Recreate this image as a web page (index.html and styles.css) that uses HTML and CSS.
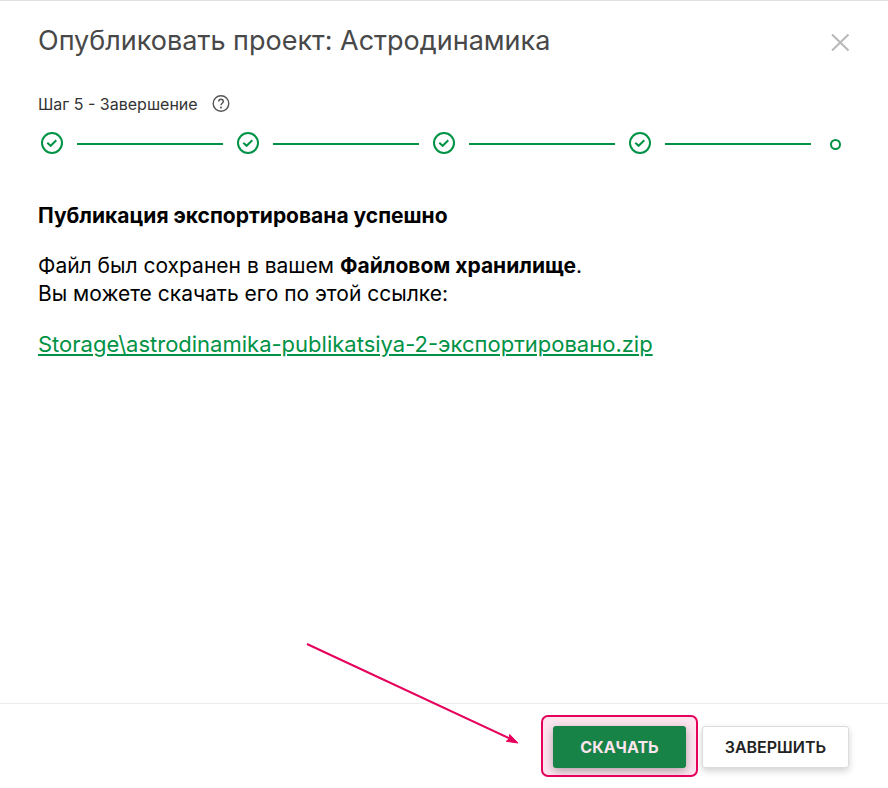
FILE: index.html
```html
<!DOCTYPE html>
<html lang="ru">
<head>
<meta charset="utf-8">
<meta name="viewport" content="width=device-width, initial-scale=1">
<title>Опубликовать проект</title>
<link rel="stylesheet" href="styles.css">
</head>
<body>
<div class="dialog" role="dialog" aria-labelledby="dialog-title">
  <header class="header">
    <h1 class="title" id="dialog-title">Опубликовать проект: Астродинамика</h1>
    <button class="close" type="button" aria-label="Закрыть">
      <svg width="20" height="20" viewBox="0 0 20 20"><path d="M2 2.5 18.5 18.5M18.5 2.5 2 18.5"/></svg>
    </button>
  </header>
  <main class="content">
    <div class="step-label">
      <span>Шаг 5 - Завершение</span>
      <button class="help" type="button" aria-label="Справка">
        <svg width="18" height="18" viewBox="0 0 18 18"><circle cx="9" cy="8.5" r="7.8"/><path d="M6.7 6.6C6.7 3.4 11.3 3.5 11.3 6.5C11.3 8.3 9 8.3 9 10.2"/><circle class="point" cx="9" cy="12.5" r="1"/></svg>
      </button>
    </div>
    <div class="stepper">
      <svg class="done" width="22" height="22" viewBox="0 0 22 22"><circle cx="11" cy="11" r="10"/><path d="M6.3 10.8 9.6 13.8 15.3 8.2"/></svg>
      <span class="line"></span>
      <svg class="done" width="22" height="22" viewBox="0 0 22 22"><circle cx="11" cy="11" r="10"/><path d="M6.3 10.8 9.6 13.8 15.3 8.2"/></svg>
      <span class="line"></span>
      <svg class="done" width="22" height="22" viewBox="0 0 22 22"><circle cx="11" cy="11" r="10"/><path d="M6.3 10.8 9.6 13.8 15.3 8.2"/></svg>
      <span class="line"></span>
      <svg class="done" width="22" height="22" viewBox="0 0 22 22"><circle cx="11" cy="11" r="10"/><path d="M6.3 10.8 9.6 13.8 15.3 8.2"/></svg>
      <span class="line"></span>
      <svg class="done" width="22" height="22" viewBox="0 0 22 22"><circle cx="10.5" cy="12.5" r="4.5"/></svg>
    </div>
    <div class="message">
      <h2 class="message-title">Публикация экспортирована успешно</h2>
      <p class="text">Файл был сохранен в вашем <strong>Файловом хранилище</strong>.<br>Вы можете скачать его по этой ссылке:</p>
      <p class="text"><a class="file" href="#">Storage\astrodinamika-publikatsiya-2-экспортировано.zip</a></p>
    </div>
  </main>
  <footer class="footer">
    <div class="highlight">
      <button class="button primary" type="button">СКАЧАТЬ</button>
      <svg class="arrow" width="214" height="104" viewBox="0 0 214 104"><path class="shaft" d="M2 2 206 97"/><path class="head" d="M213 101 201.3 99.3 204.5 96.5 204.7 92.5Z"/></svg>
    </div>
    <button class="button" type="button">ЗАВЕРШИТЬ</button>
  </footer>
</div>
</body>
</html>
```

FILE: styles.css
```css
* {
  box-sizing: border-box;
}

body {
  margin: 0;
  background: #fff;
  color: #000;
  font-family: Inter, Roboto, sans-serif;
}

.dialog {
  display: flex;
  flex-direction: column;
  min-height: 100vh;
  border-top: 1px solid #e0e0e0;
}

.header {
  display: flex;
  align-items: center;
  justify-content: space-between;
  padding: 22px 38px 0 38px;
}

.title {
  margin: 0;
  color: #484848;
  font-size: 27px;
  font-weight: 400;
  line-height: 36px;
}

.close,
.help {
  display: flex;
  padding: 0;
  border: 0;
  background: none;
  cursor: pointer;
}

.close {
  padding-top: 2px;
}

.close svg {
  fill: none;
  stroke: #b8b8b8;
  stroke-width: 2;
}

.content {
  flex: 1;
  padding: 35px 39px 24px 38px;
}

.step-label {
  display: flex;
  align-items: center;
  gap: 14px;
  color: #333;
  font-size: 16px;
  line-height: 20px;
}

.help svg {
  fill: none;
  stroke: #555;
  stroke-width: 1.4;
}

.help .point {
  fill: #555;
  stroke: none;
}

.stepper {
  display: flex;
  align-items: center;
  gap: 14px;
  margin-top: 18px;
  padding: 0 2px 0 3px;
}

.done {
  flex: none;
  fill: none;
  stroke: #009245;
  stroke-width: 2;
}

.line {
  flex: 1;
  height: 4px;
  border-bottom: 2px solid #009245;
}

.message {
  display: grid;
  gap: 22px;
  margin-top: 48px;
  font-size: 21px;
  line-height: 28px;
}

.message-title {
  margin: 0;
  font-size: 21px;
  font-weight: 700;
}

.text {
  margin: 0;
}

.file {
  color: #009245;
  font-size: 22px;
  text-decoration-thickness: 2px;
  text-underline-offset: 2px;
}

.footer {
  display: flex;
  justify-content: flex-end;
  gap: 16px;
  padding: 22px 39px 20px;
  border-top: 1px solid #ececec;
}

.button {
  height: 42px;
  padding: 0 22px;
  border: 1px solid #dcdcdc;
  border-radius: 3px;
  background: #fff;
  box-shadow: 0 3px 7px rgba(0, 0, 0, 0.18);
  color: #222;
  font-family: inherit;
  font-size: 16px;
  font-weight: 600;
  cursor: pointer;
}

.primary {
  padding: 0 27px;
  border: 0;
  background: #009245;
  box-shadow: 0 3px 10px rgba(0, 0, 0, 0.32);
  color: #fff;
  font-weight: 700;
}

.highlight {
  position: relative;
}

.highlight::after {
  content: "";
  position: absolute;
  inset: -11px -12px -9px -12px;
  border: 2px solid #e6005c;
  border-radius: 7px;
  background: rgba(230, 0, 92, 0.1);
  pointer-events: none;
}

.arrow {
  position: absolute;
  right: 100%;
  bottom: 100%;
  margin: 0 34px -20px 0;
  pointer-events: none;
}

.shaft {
  fill: none;
  stroke: #e6005c;
  stroke-width: 2;
}

.head {
  fill: #e6005c;
  stroke: #e6005c;
}
```
